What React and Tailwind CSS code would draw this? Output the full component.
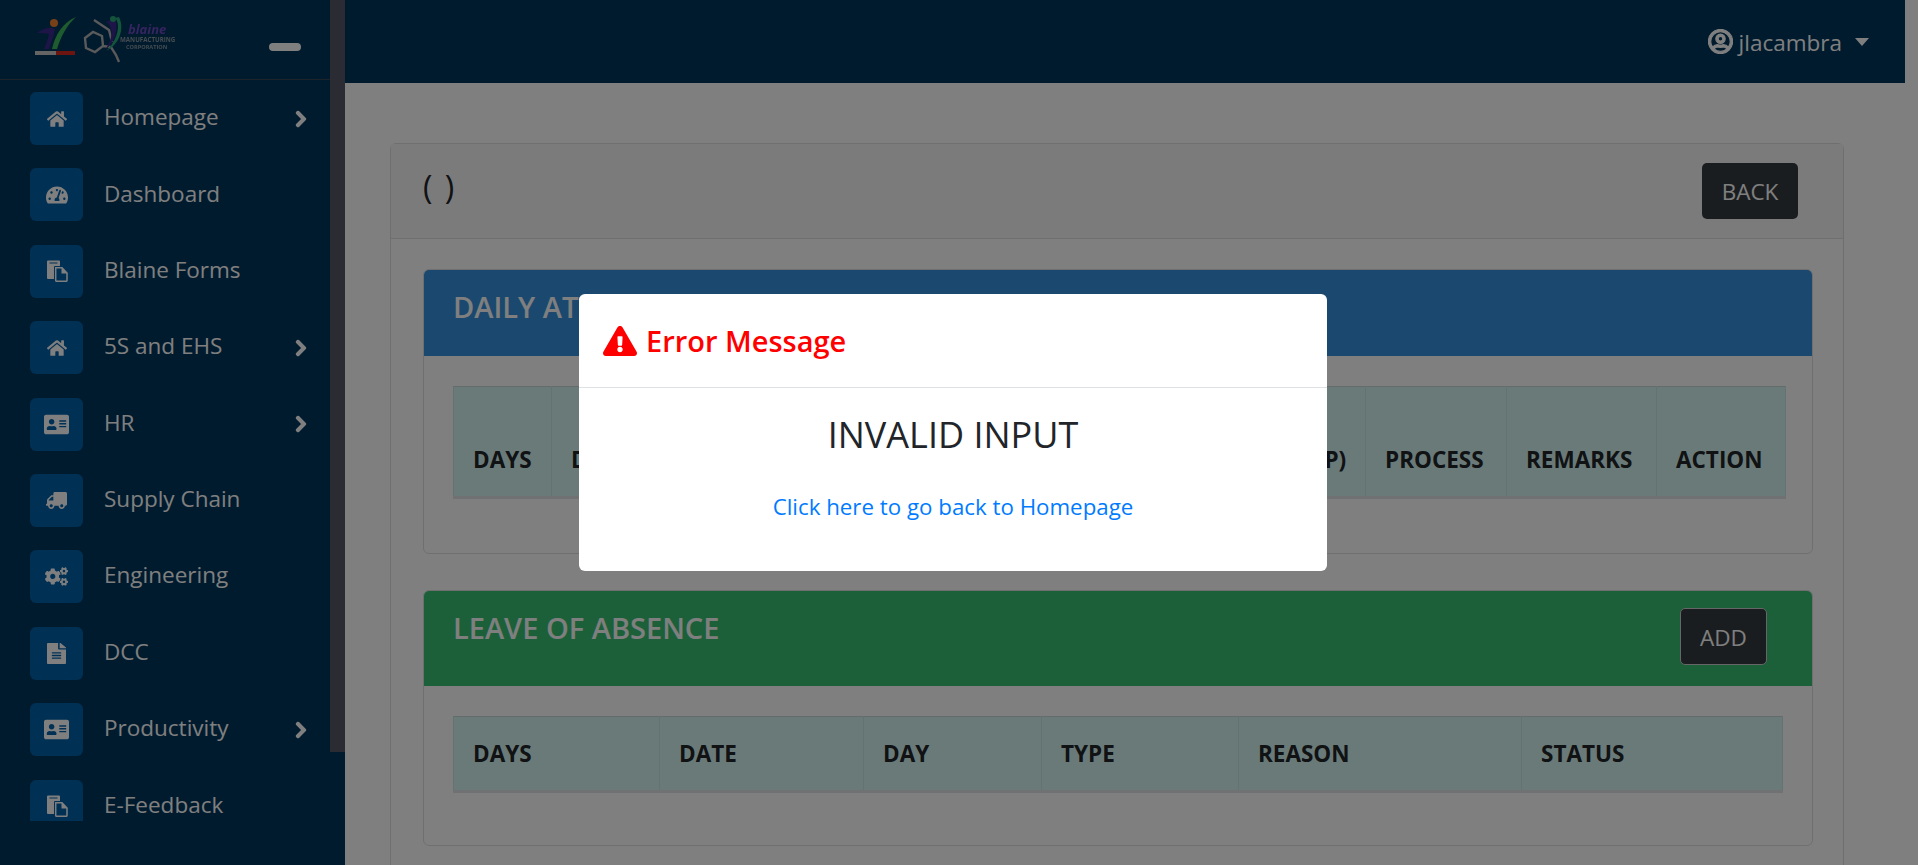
import {
  FaHome,
  FaTachometerAlt,
  FaAddressCard,
  FaTruck,
  FaCogs,
  FaFileAlt,
  FaChevronRight,
  FaRegUserCircle,
  FaExclamationTriangle,
} from "react-icons/fa";

// solid back sheet with an outlined front sheet, the package's copy icon is different
function FilesIcon() {
  return (
    <svg width="22" height="22" viewBox="0 0 22 22">
      <path d="M1 1.500A1 1 0 0 1 2 .5h11a1 1 0 0 1 1 1V6H9a1 1 0 0 0-1 1v12H2a1 1 0 0 1-1-1z" fill="#fff" />
      <rect x="3.500" y="2.500" width="8" height="1" fill="#0060a8" />
      <path d="M9.700 7.700h6.300l5 5.300v7.300a1 1 0 0 1-1 1H10.700a1 1 0 0 1-1-1z" fill="none" stroke="#fff" strokeWidth="1.500" />
      <path d="M15.500 7.500v6h6z" fill="#fff" />
    </svg>
  );
}

const menu = [
  { label: "Homepage", icon: <FaHome className="text-[20px] text-white" />, sub: true },
  { label: "Dashboard", icon: <FaTachometerAlt className="text-[22px] text-white" /> },
  { label: "Blaine Forms", icon: <FilesIcon /> },
  { label: "5S and EHS", icon: <FaHome className="text-[20px] text-white" />, sub: true },
  { label: "HR", icon: <FaAddressCard className="text-[25px] text-white" />, sub: true },
  { label: "Supply Chain", icon: <FaTruck className="-scale-x-100 text-[21px] text-white" /> },
  { label: "Engineering", icon: <FaCogs className="text-[23px] text-white" /> },
  { label: "DCC", icon: <FaFileAlt className="h-[21px] w-[19px] text-white" preserveAspectRatio="none" /> },
  { label: "Productivity", icon: <FaAddressCard className="text-[25px] text-white" />, sub: true },
  { label: "E-Feedback", icon: <FilesIcon /> },
];

const dailyCols = [
  ["DAYS", "w-[98px]"],
  ["DATE", "w-[709px]"],
  ["OT (P)", "w-[105px]"],
  ["PROCESS", "w-[141px]"],
  ["REMARKS", "w-[150px]"],
  ["ACTION", "w-[129px]"],
];

const leaveCols = [
  ["DAYS", "w-[206px]"],
  ["DATE", "w-[204px]"],
  ["DAY", "w-[178px]"],
  ["TYPE", "w-[197px]"],
  ["REASON", "w-[283px]"],
  ["STATUS", "w-[261px]"],
];

function Logo() {
  return (
    <svg width="152" height="56" viewBox="0 0 152 56" fill="none" className="overflow-visible blur-[0.6px]">
      {/* refamed mark */}
      <circle cx="34" cy="11" r="4" fill="#f08030" />
      <path d="M17 21c6-5 13-6 18-4-1 7-4 13-6 20h-5c2-5 4-10 5-15-4-1-8-1-12-1z" fill="#3a2a90" />
      <path d="M37 37h-5c3-14 11-27 24-32-9 8-15 19-19 32z" fill="#3cb860" />
      <rect x="15" y="39" width="21" height="4" fill="#c8c8c8" />
      <rect x="36" y="39" width="19" height="4" fill="#d8281f" />
      {/* blaine mark */}
      <path d="M65 26l8-6 9 4 1 10-8 6-9-4zM83 34l8 1 5 8 3 7M74 8l15 10 3 12" stroke="#b4b4b4" strokeWidth="2.400" />
      <path d="M86 10c7 4 8 16-1 28 9-6 14-20 10-32z" fill="#3a2a90" />
      <path d="M95 6c6 6 3 22-9 33 13-6 19-22 13-34z" fill="#2aa878" />
      <circle cx="93" cy="7" r="3" fill="#2aa878" />
      <text x="108" y="22" fontSize="13" fontStyle="italic" fontWeight="700" fill="#6a48c0" fontFamily="Open Sans">blaine</text>
      <text x="100" y="30" fontSize="6.200" fontWeight="700" fill="#8a9aa0" fontFamily="Open Sans">MANUFACTURING</text>
      <text x="106" y="37" fontSize="5.600" fontWeight="700" fill="#8a9aa0" fontFamily="Open Sans">CORPORATION</text>
    </svg>
  );
}

function Sidebar() {
  return (
    <aside className="flex h-full w-[345px] shrink-0 bg-[#00345c]">
      <div className="w-[330px] shrink-0">
        <div className="flex h-[80px] items-center justify-between border-b border-[#3a4650] pl-[20px] pr-[29px]">
          <Logo />
          <div className="mt-[14px] h-[8px] w-[32px] rounded-full bg-white"></div>
        </div>
        <nav className="flex h-[741px] flex-col gap-[23.4px] overflow-hidden pl-[30px] pr-[20px] pt-[12px]">
          {menu.map((item) => (
            <div key={item.label} className="flex h-[53px] shrink-0 items-center">
              <div className="flex h-[53px] w-[53px] shrink-0 items-center justify-center rounded-[6px] bg-[#0060a8]">
                {item.icon}
              </div>
              <span className="mb-[3px] ml-[21px] text-[22.5px] text-white">{item.label}</span>
              {item.sub && <FaChevronRight className="ml-auto text-[18px] text-white" stroke="currentColor" strokeWidth="36" />}
            </div>
          ))}
        </nav>
      </div>
      <div className="h-[752px] w-[15px] bg-[#555666]"></div>
    </aside>
  );
}

function HeadRow({ cols, tall, width }) {
  return (
    <table className={`${width} table-fixed border-collapse`}>
      <thead>
        <tr className="bg-[#d4f5f3]">
          {cols.map(([name, colWidth]) => (
            <th
              key={name}
              className={`${colWidth} ${tall ? "h-[111px]" : "h-[75px]"} border border-b-[3px] border-[#c6e6e4] border-b-[#dee2e6] border-t-[#c6d6d6] px-[19px] pb-[20px] align-bottom text-left text-[22.5px] font-bold leading-[32px] whitespace-nowrap text-[#212529]`}
            >
              {name}
            </th>
          ))}
        </tr>
      </thead>
    </table>
  );
}

function Main() {
  return (
    <main className="flex h-full min-w-0 flex-1 flex-col pr-[13px]">
      <header className="flex h-[83px] shrink-0 items-center justify-end bg-[#00345c] pr-[36px] text-white">
        <FaRegUserCircle className="text-[25px]" stroke="currentColor" strokeWidth="24" />
        <span className="ml-[6px] mt-[2px] text-[22.5px]">jlacambra</span>
        <span className="ml-[13px] h-0 w-0 border-x-[7px] border-t-[8px] border-x-transparent border-t-white"></span>
      </header>
      <div className="ml-[45px] mr-[61px] mt-[60px] rounded-t-[6px] border border-b-0 border-[#dfdfdf]">
        <div className="flex h-[95px] items-center justify-between border-b border-[#dfdfdf] bg-[#f7f7f7] pl-[32px] pr-[45px]">
          <h3 className="mb-[9px] text-[32px] leading-none tracking-[2px] text-[#212529]">( )</h3>
          <button className="flex h-[56px] w-[96px] items-center justify-center rounded-[5px] bg-[#343a40] pt-[2px] text-[22.5px] text-white">
            BACK
          </button>
        </div>
        <div className="flex flex-col gap-[36px] pb-[40px] pl-[32px] pr-[30px] pt-[30px]">
          <section className="h-[285px] rounded-[6px] border border-[#dfdfdf]">
            <div className="flex h-[86px] items-start rounded-t-[5px] bg-[#3490dc] pl-[29px] pt-[17px]">
              <h4 className="text-[29px] font-semibold leading-[40px] whitespace-nowrap text-white">DAILY ATTENDANCE</h4>
            </div>
            <div className="pl-[29px] pt-[30px]">
              <HeadRow cols={dailyCols} width="w-[1332px]" tall />
            </div>
          </section>
          <section className="h-[256px] rounded-[6px] border border-[#dfdfdf]">
            <div className="flex h-[95px] items-start justify-between rounded-t-[5px] bg-[#38c172] pl-[29px] pr-[45px] pt-[17px]">
              <h4 className="text-[29px] font-semibold leading-[40px] text-white">LEAVE OF ABSENCE</h4>
              <button className="flex h-[57px] w-[87px] items-center justify-center rounded-[5px] border border-[#cccccc] bg-[#343a40] pt-[2px] text-[22.5px] text-white">
                ADD
              </button>
            </div>
            <div className="pl-[29px] pt-[30px]">
              <HeadRow cols={leaveCols} width="w-[1329px]" />
            </div>
          </section>
        </div>
      </div>
    </main>
  );
}

function ErrorModal() {
  return (
    <div className="absolute inset-0 flex justify-center bg-black/50 pt-[294px]">
      <div className="mr-[12px] h-[277px] w-[748px] rounded-[6px] bg-white">
        <div className="flex h-[94px] items-center border-b border-[#dee2e6] pl-[24px]">
          <FaExclamationTriangle className="text-[34px] text-[#ff0000]" />
          <h4 className="ml-[9px] text-[29px] font-semibold text-[#ff0000]">Error Message</h4>
        </div>
        <div className="flex flex-col items-center pt-[21px]">
          <h3 className="text-[36px] leading-[52px] text-[#212529]">INVALID INPUT</h3>
          <a href="#" className="mt-[29px] text-[22.3px] text-[#007bff]">
            Click here to go back to Homepage
          </a>
        </div>
      </div>
    </div>
  );
}

export default function App() {
  return (
    <div className="relative flex h-[865px] w-full overflow-hidden bg-white font-['Open_Sans',sans-serif]">
      <Sidebar />
      <Main />
      <ErrorModal />
    </div>
  );
}
